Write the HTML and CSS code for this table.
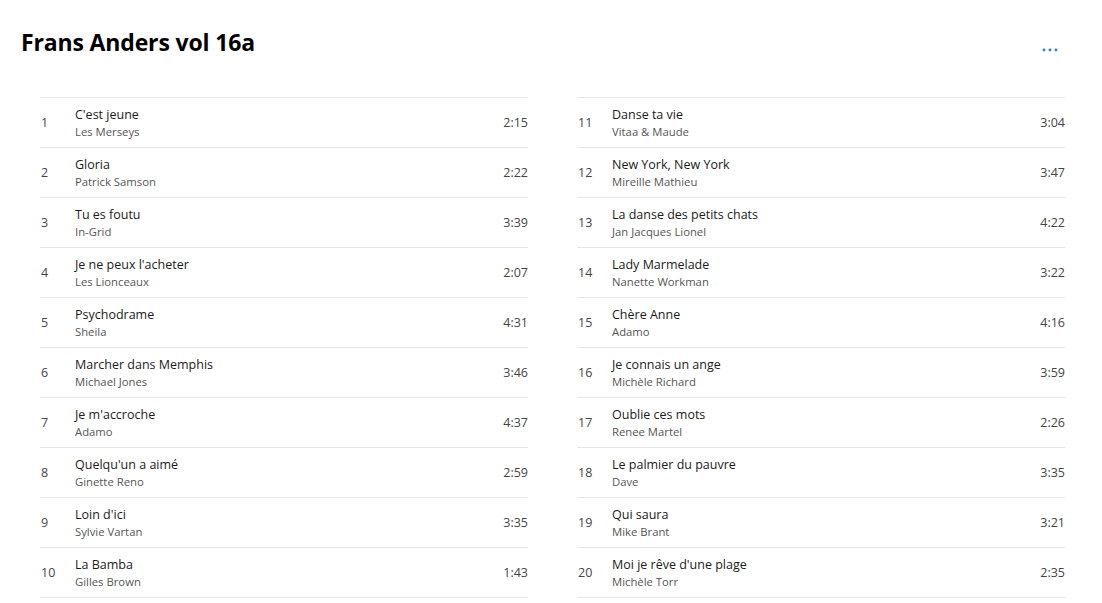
FILE: index.html
```html
<!DOCTYPE html>
<html>
<head>
<meta charset="utf-8">
<link rel="stylesheet" href="styles.css">
</head>
<body>
<div class="page">
  <header class="header">
    <h1 class="title">Frans Anders vol 16a</h1>
    <button class="more" aria-label="More"><svg width="16" height="4" viewBox="0 0 16 4"><circle cx="2" cy="2" r="1.4"/><circle cx="8" cy="2" r="1.4"/><circle cx="14" cy="2" r="1.4"/></svg></button>
  </header>
  <div class="columns">
    <ol class="list">
      <li class="row"><span class="num">1</span><div class="info"><div class="song">C'est jeune</div><div class="artist">Les Merseys</div></div><span class="dur">2:15</span></li>
      <li class="row"><span class="num">2</span><div class="info"><div class="song">Gloria</div><div class="artist">Patrick Samson</div></div><span class="dur">2:22</span></li>
      <li class="row"><span class="num">3</span><div class="info"><div class="song">Tu es foutu</div><div class="artist">In-Grid</div></div><span class="dur">3:39</span></li>
      <li class="row"><span class="num">4</span><div class="info"><div class="song">Je ne peux l'acheter</div><div class="artist">Les Lionceaux</div></div><span class="dur">2:07</span></li>
      <li class="row"><span class="num">5</span><div class="info"><div class="song">Psychodrame</div><div class="artist">Sheila</div></div><span class="dur">4:31</span></li>
      <li class="row"><span class="num">6</span><div class="info"><div class="song">Marcher dans Memphis</div><div class="artist">Michael Jones</div></div><span class="dur">3:46</span></li>
      <li class="row"><span class="num">7</span><div class="info"><div class="song">Je m'accroche</div><div class="artist">Adamo</div></div><span class="dur">4:37</span></li>
      <li class="row"><span class="num">8</span><div class="info"><div class="song">Quelqu'un a aimé</div><div class="artist">Ginette Reno</div></div><span class="dur">2:59</span></li>
      <li class="row"><span class="num">9</span><div class="info"><div class="song">Loin d'ici</div><div class="artist">Sylvie Vartan</div></div><span class="dur">3:35</span></li>
      <li class="row"><span class="num">10</span><div class="info"><div class="song">La Bamba</div><div class="artist">Gilles Brown</div></div><span class="dur">1:43</span></li>
    </ol>
    <ol class="list">
      <li class="row"><span class="num">11</span><div class="info"><div class="song">Danse ta vie</div><div class="artist">Vitaa &amp; Maude</div></div><span class="dur">3:04</span></li>
      <li class="row"><span class="num">12</span><div class="info"><div class="song">New York, New York</div><div class="artist">Mireille Mathieu</div></div><span class="dur">3:47</span></li>
      <li class="row"><span class="num">13</span><div class="info"><div class="song">La danse des petits chats</div><div class="artist">Jan Jacques Lionel</div></div><span class="dur">4:22</span></li>
      <li class="row"><span class="num">14</span><div class="info"><div class="song">Lady Marmelade</div><div class="artist">Nanette Workman</div></div><span class="dur">3:22</span></li>
      <li class="row"><span class="num">15</span><div class="info"><div class="song">Chère Anne</div><div class="artist">Adamo</div></div><span class="dur">4:16</span></li>
      <li class="row"><span class="num">16</span><div class="info"><div class="song">Je connais un ange</div><div class="artist">Michèle Richard</div></div><span class="dur">3:59</span></li>
      <li class="row"><span class="num">17</span><div class="info"><div class="song">Oublie ces mots</div><div class="artist">Renee Martel</div></div><span class="dur">2:26</span></li>
      <li class="row"><span class="num">18</span><div class="info"><div class="song">Le palmier du pauvre</div><div class="artist">Dave</div></div><span class="dur">3:35</span></li>
      <li class="row"><span class="num">19</span><div class="info"><div class="song">Qui saura</div><div class="artist">Mike Brant</div></div><span class="dur">3:21</span></li>
      <li class="row"><span class="num">20</span><div class="info"><div class="song">Moi je rêve d'une plage</div><div class="artist">Michèle Torr</div></div><span class="dur">2:35</span></li>
    </ol>
  </div>
</div>
</body>
</html>
```
FILE: styles.css
```css
* { box-sizing: border-box; }
html, body { margin: 0; padding: 0; background: #fff; }
body {
  font-family: "Open Sans", "Noto Sans", "Liberation Sans", sans-serif;
  color: #1b1b1b;
}
.page { padding: 0 37px 0 21px; }
.header {
  display: flex;
  align-items: flex-start;
  justify-content: space-between;
  height: 97px;
}
.title {
  margin: 28px 0 0 0;
  font-size: 23px;
  font-weight: 700;
  line-height: 28px;
  color: #000;
  letter-spacing: -0.15px;
}
.more {
  margin: 48px 7px 0 0;
  padding: 0;
  border: 0;
  background: none;
  fill: #2b7de0;
  display: flex;
}
.columns {
  display: grid;
  grid-template-columns: 488px 488px;
  column-gap: 49px;
  padding-left: 19px;
}
.list {
  list-style: none;
  margin: 0;
  padding: 0;
  border-bottom: 1px solid #e5e5e5;
}
.row {
  display: flex;
  align-items: center;
  height: 50px;
  border-top: 1px solid #e5e5e5;
  padding-top: 1px;
}
.num {
  width: 35px;
  padding-left: 1px;
  margin-bottom: 2px;
  font-size: 12.5px;
  color: #444;
}
.info { flex: 1; }
.song {
  font-size: 12.5px;
  line-height: 17px;
  color: #1b1b1b;
}
.artist {
  font-size: 11.3px;
  line-height: 17px;
  color: #555;
}
.dur {
  margin-bottom: 2px;
  font-size: 12.5px;
  color: #444;
}
```
